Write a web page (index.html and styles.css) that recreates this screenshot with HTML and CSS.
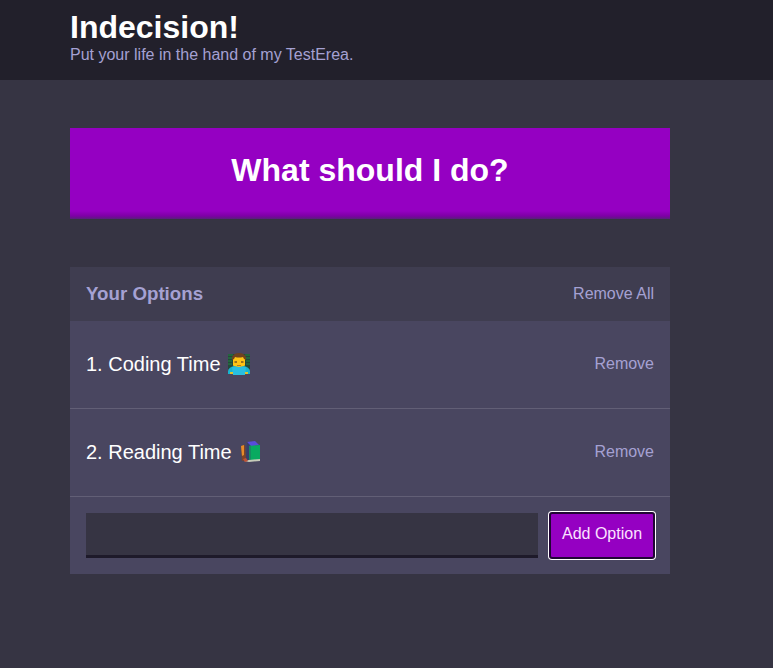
FILE: index.html
```html
<!DOCTYPE html>
<html lang="en">
<head>
<meta charset="utf-8">
<title>Indecision</title>
<link rel="stylesheet" href="styles.css">
</head>
<body>
<header class="header">
  <div class="container">
    <h1 class="header__title">Indecision!</h1>
    <h2 class="header__subtitle">Put your life in the hand of my TestErea.</h2>
  </div>
</header>
<main class="container">
  <button class="big-button">What should I do?</button>
  <section class="widget">
    <div class="widget-header">
      <h3 class="widget-header__title">Your Options</h3>
      <button class="button--link">Remove All</button>
    </div>
    <div class="option">
      <p class="option__text">1. Coding Time
        <svg class="emoji emoji--coder" viewBox="0 0 24 22" aria-hidden="true">
          <path fill="#24483a" d="M1 1h22v15H1z"/>
          <path stroke="#238540" stroke-width="1" d="M1 2h5M18 2h5M1 5h4M19 5h4M1 8h4M19 8h4M1 11h4M19 11h4"/>
          <path fill="#ffc414" d="M6 5q6-6 12 0v7q-1 4-6 4t-6-4z"/>
          <path fill="#70431f" d="M5 7V4q2-4 7-4t7 4v3l-2-1-1-2q-4 1-8 0L7 6z"/>
          <path fill="#9c721c" d="M7.500 8h2.500v2H7.500zM14 8h2.500v2H14z"/>
          <path fill="#b77c20" d="M10 12h4v1h-4z"/>
          <path fill="#16b6d0" d="M1 21v-3q1-4 6-5l5 1 5-1q5 1 6 5v3z"/>
          <path fill="#29bfe0" d="M5 14h14l-1 8H6z"/>
          <path fill="#dfc42d" d="M3 19h3v2H3zM18 19h3v2h-3z"/>
        </svg>
      </p>
      <button class="button--link">Remove</button>
    </div>
    <div class="option">
      <p class="option__text">2. Reading Time
        <svg class="emoji emoji--books" viewBox="0 0 22 22" aria-hidden="true">
          <path fill="#7d4327" d="m1 5 4-1 1 15-4 1z"/>
          <path fill="#e58b29" d="m1 5 3-1v10l-2 1z"/>
          <path fill="#584cda" d="m7 1 8-1 4 4-9 2z"/>
          <path fill="#353f6c" d="m7 1 3 3v16l-4-1z"/>
          <path fill="#08aa60" d="m9 5 11-1v15l-11 1z"/>
          <path fill="#168b61" d="m9 5 2-1v15l-2 1z"/>
          <path fill="#c6cbb9" d="m4 20 5-1 11-1v2L9 21l-5-1z"/>
          <path fill="#bd5136" d="m3 18 3-1 2 3-3 1z"/>
        </svg>
      </p>
      <button class="button--link">Remove</button>
    </div>
    <form class="add-option">
      <input class="add-option__input" type="text" aria-label="Option">
      <button class="button" type="button">Add Option</button>
    </form>
  </section>
</main>
</body>
</html>
```
FILE: styles.css
```css
* { box-sizing: border-box; }
body {
  margin: 0;
  background: #363443;
  color: #fff;
  font-family: "Liberation Sans", Arial, sans-serif;
  font-size: 16px;
}
h1, h2, h3, p { margin: 0; }
button { font-family: inherit; border: 0; margin: 0; }
.container { width: 600px; margin-left: 70px; }
.header { height: 80px; padding-top: 9px; margin-bottom: 48px; background: #22202b; }
.header__title { font-size: 32px; line-height: 36px; }
.header__subtitle { padding-top: 1px; font-size: 16px; line-height: 18px; font-weight: 400; color: #a5a1d3; }
.big-button {
  display: block;
  width: 100%;
  height: 91px;
  margin-bottom: 48px;
  padding: 0 0 6px;
  background: linear-gradient(#9500c2 0, #9500c2 83px, #7d00a5 88px, #58207a 91px);
  color: #fff;
  font-size: 32px;
  font-weight: 700;
}
.widget { background: #494660; }
.widget-header {
  display: flex;
  align-items: center;
  justify-content: space-between;
  height: 54px;
  padding: 0 16px;
  background: #3f3d50;
  color: #a5a1d3;
}
.widget-header__title { font-size: 18.72px; }
.button--link { padding: 0; background: none; color: #a5a1d3; font-size: 16px; line-height: 18px; }
.option {
  display: flex;
  align-items: center;
  justify-content: space-between;
  height: 88px;
  padding: 0 16px 2px;
  border-bottom: 1px solid #625f76;
}
.option__text { display: flex; align-items: center; font-size: 20px; line-height: 24px; }
.emoji { flex: none; height: 22px; margin-top: 1px; }
.emoji--coder { width: 24px; margin-left: 6px; }
.emoji--books { width: 22px; margin-left: 8px; }
.add-option { display: flex; gap: 12px; padding: 16px; }
.add-option__input {
  flex: 1;
  min-width: 0;
  height: 45px;
  padding: 8px;
  background: #363443;
  border: 0;
  border-bottom: 3px solid #1e1a2a;
}
.button {
  width: 104px;
  height: 45px;
  padding: 0 0 3px;
  background: #9500c2;
  border: 1px solid #210535;
  border-radius: 2px;
  box-shadow: 0 0 0 1px #210535, 0 0 0 2px #fff;
  color: #fbe3ff;
  font-size: 16px;
}
```
